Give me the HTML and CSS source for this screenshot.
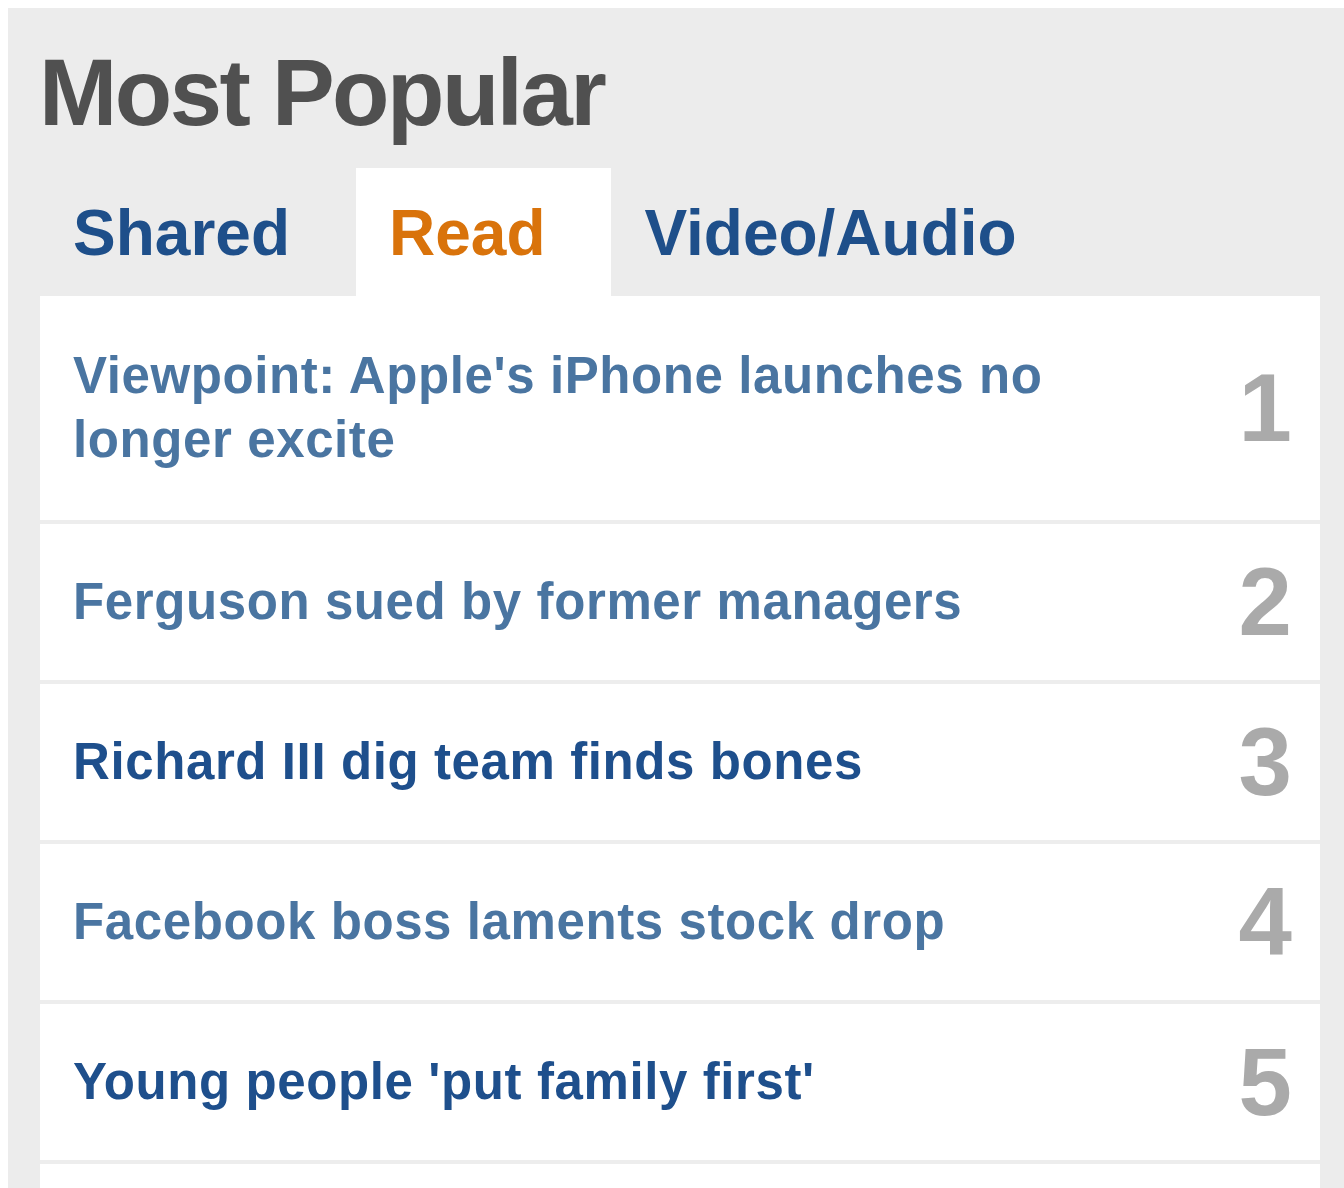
FILE: index.html
```html
<!DOCTYPE html>
<html lang="en">
<head>
  <meta charset="UTF-8">
  <title>Most Popular</title>
  <meta name="viewport" content="width=device-width, initial-scale=1.0">
  <link rel="stylesheet" href="styles.css">
</head>
<body>

  <div class="popular">
    <h2 class="popular-title">Most Popular</h2>

    <ul class="tabs">
      <li class="tab">Shared</li>
      <li class="tab tab-active">Read</li>
      <li class="tab">Video/Audio</li>
    </ul>

    <ol class="stories">
      <li class="story">
        <a class="story-link visited" href="#">Viewpoint: Apple's iPhone launches no longer excite</a>
        <span class="story-rank">1</span>
      </li>
      <li class="story">
        <a class="story-link visited" href="#">Ferguson sued by former managers</a>
        <span class="story-rank">2</span>
      </li>
      <li class="story">
        <a class="story-link" href="#">Richard III dig team finds bones</a>
        <span class="story-rank">3</span>
      </li>
      <li class="story">
        <a class="story-link visited" href="#">Facebook boss laments stock drop</a>
        <span class="story-rank">4</span>
      </li>
      <li class="story">
        <a class="story-link" href="#">Young people 'put family first'</a>
        <span class="story-rank">5</span>
      </li>
    </ol>
  </div>

</body>
</html>
```

FILE: styles.css
```css
body {
  margin: 0;
  padding: 8px 0 0 8px;
  background: #ffffff;
  font-family: 'Liberation Sans', Arial, sans-serif;
  overflow: hidden;
  height: 1188px;
  box-sizing: border-box;
}

.popular {
  display: flex;
  flex-direction: column;
  background: #ececec;
  padding: 25px 24px 0 32px;
  height: 100%;
  box-sizing: border-box;
}

.popular-title {
  margin: 0 0 15px -1px;
  font-size: 94px;
  line-height: 120px;
  font-weight: bold;
  letter-spacing: -2.5px;
  color: #505050;
}

.tabs {
  list-style: none;
  margin: 0;
  padding: 0;
  display: flex;
}

.tab {
  padding: 3px 66px 0 33px;
  height: 128px;
  box-sizing: border-box;
  font-size: 64px;
  line-height: 125px;
  font-weight: bold;
  white-space: nowrap;
  color: #1e4f8a;
}

.tab-active {
  background: #ffffff;
  color: #d9730b;
}

.stories {
  flex: 1;
  list-style: none;
  margin: 0;
  padding: 0;
  background: #ffffff;
}

.story {
  display: flex;
  align-items: center;
  padding: 46px 28px 46px 33px;
  border-bottom: 4px solid #ededed;
}

.story:first-child {
  padding-top: 48px;
  padding-bottom: 48px;
}

.story-link {
  flex: 1;
  margin-right: 120px;
  font-size: 51px;
  line-height: 64px;
  font-weight: bold;
  letter-spacing: 0.6px;
  color: #1e4f8c;
  text-decoration: none;
}

.story-link.visited {
  color: #4a75a1;
}

.story-rank {
  font-size: 96px;
  font-weight: bold;
  line-height: 64px;
  color: #aaaaaa;
}
```
